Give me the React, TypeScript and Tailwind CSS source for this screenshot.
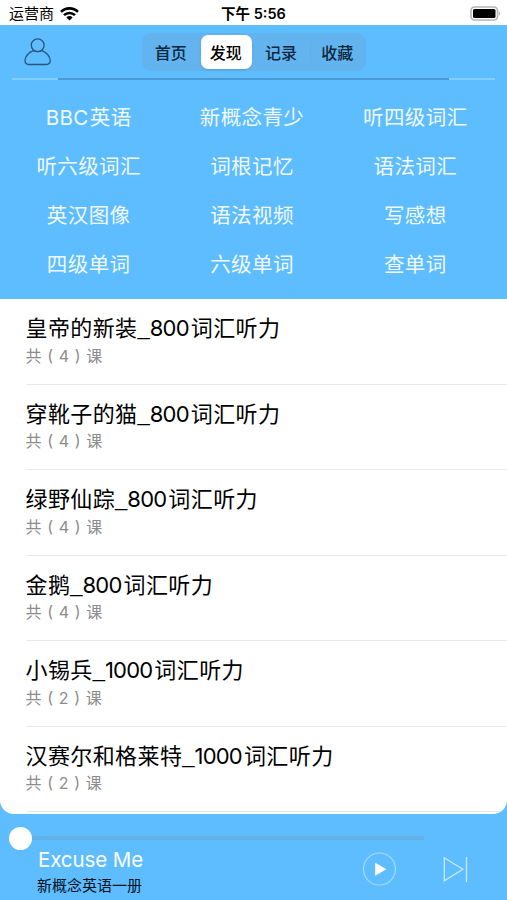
import React, { useState } from 'react';

interface Course {
  id: string;
  name: string;
  words: string;
  suffix: string;
  count: number;
}

const tabs = ['首页', '发现', '记录', '收藏'];

const categories = [
  'BBC 英语', '新概念青少', '听四级词汇',
  '听六级词汇', '词根记忆', '语法词汇',
  '英汉图像', '语法视频', '写感想',
  '四级单词', '六级单词', '查单词'
];

const courses: Course[] = [
  { id: 'emperor', name: '皇帝的新装', words: '800', suffix: '词汇听力', count: 4 },
  { id: 'cat', name: '穿靴子的猫', words: '800', suffix: '词汇听力', count: 4 },
  { id: 'oz', name: '绿野仙踪', words: '800', suffix: '词汇听力', count: 4 },
  { id: 'goose', name: '金鹅', words: '800', suffix: '词汇听力', count: 4 },
  { id: 'soldier', name: '小锡兵', words: '1000', suffix: '词汇听力', count: 2 },
  { id: 'hansel', name: '汉赛尔和格莱特', words: '1000', suffix: '词汇听力', count: 2 }
];

const StatusBar: React.FC = () => (
  <div className="grid h-[25px] shrink-0 grid-cols-3 items-center bg-white pt-[2px] text-black">
    <div className="flex items-center gap-[6px] pl-[9px]">
      <span className="text-[15px] leading-none">运营商</span>
      <svg width="19" height="14" viewBox="0 0 19 14" fill="none" stroke="currentColor" strokeWidth="2.6">
        <path d="M1 4.9a12 12 0 0 1 17 0" />
        <path d="M4 8.2a7.8 7.8 0 0 1 11 0" />
        <path d="M9.5 13.6 6.4 10.4a4.4 4.4 0 0 1 6.2 0z" fill="currentColor" stroke="none" />
      </svg>
    </div>
    <div className="pt-px text-center text-[14.5px] font-semibold leading-none whitespace-nowrap">下午 5:56</div>
    <div className="flex justify-end pr-[6px]">
      <svg width="31" height="15" viewBox="0 0 31 15">
        <rect x="1" y="1" width="26.5" height="13" rx="3.5" fill="#fff" stroke="#b5b5b5" strokeWidth="1.6" />
        <rect x="3" y="3" width="22.5" height="9" rx="1.5" fill="#000" />
        <path d="M28.8 5.2c1.8.8 1.8 3.8 0 4.6z" fill="#b5b5b5" />
      </svg>
    </div>
  </div>
);

const App: React.FC = () => {
  const [activeTab, setActiveTab] = useState('发现');

  return (
    <div className="flex h-[900px] w-[507px] flex-col overflow-hidden bg-[#5ebdff] font-[Inter,'Noto_Sans_CJK_SC',sans-serif]">
      <StatusBar />

      {/* Header */}
      <header className="flex h-[53px] shrink-0 items-center pl-[24px]">
        <button aria-label="profile" className="pt-px text-[#2b567c]">
          <svg width="28" height="28" viewBox="0 0 28 28" fill="none" stroke="currentColor" strokeWidth="1.3">
            <circle cx="13.7" cy="7.2" r="6.4" />
            <path d="M9.2 12.7C4.6 14.5 1 18.5 1 22.4c0 2.9 1.3 4.1 4.6 4.1h16c3.3 0 4.6-1.2 4.6-4.1 0-3.9-3.6-7.9-8.2-9.7" />
            <path d="M9.2 12.7c2.8 1.3 6 1.3 8.8 0" />
          </svg>
        </button>
        <nav className="ml-[90px] flex h-[38px] w-[224px] items-center rounded-[9px] bg-[#63b4ee] p-[2px]">
          {tabs.map((tab) => (
            <button
              key={tab}
              onClick={() => setActiveTab(tab)}
              className={
                tab === activeTab
                  ? 'mx-[2px] h-[34px] w-[51px] shrink-0 rounded-[7px] bg-white pt-[2px] pr-[2px] text-[16px] font-medium leading-none text-black shadow-sm'
                  : 'h-[22px] flex-1 pt-[2px] pr-[2px] text-[16px] font-medium leading-none text-[#0b2740] last:border-l last:border-[#5dafe8] last:pr-0'
              }
            >
              {tab}
            </button>
          ))}
        </nav>
      </header>

      <div className="mx-[12px] flex h-[2px] shrink-0">
        <div className="w-[46px] bg-[#84cdff]" />
        <div className="w-[391px] bg-[#4a9ad5]" />
        <div className="flex-1 bg-[#84cdff]" />
      </div>

      {/* Categories */}
      <section className="grid h-[219px] shrink-0 grid-cols-3 auto-rows-[49px] pt-[14px] pr-[10px] pl-[7px]">
        {categories.map((category) => (
          <button key={category} className="pb-px text-[20.5px] leading-none tracking-[0.4px] text-[#f1f9ff] [word-spacing:-5px]">
            {category}
          </button>
        ))}
      </section>

      {/* Course list */}
      <main className="h-[515px] shrink-0 overflow-hidden rounded-b-[14px] bg-white">
        {courses.map((course) => (
          <div key={course.id} className="ml-[26px] h-[85.5px] border-b border-[#e9e9e9] pt-[15px]">
            <div className="-ml-[0.5px] flex h-[28px] items-center text-[22px] leading-none tracking-[0.4px] text-black">
              <span>{course.name}</span>
              <span className="font-['Liberation_Sans',sans-serif] tracking-normal">_</span>
              <span className="tracking-[-0.8px]">{course.words}</span>
              <span className="ml-[2px]">{course.suffix}</span>
            </div>
            <div className="-ml-[0.5px] flex h-[27px] items-center text-[16px] leading-none text-[#8c8c8c] [word-spacing:1.2px]">
              共 ( {course.count} ) 课
            </div>
          </div>
        ))}
      </main>

      {/* Player */}
      <footer className="flex h-[86px] shrink-0 flex-col">
        <div className="flex h-[24px] shrink-0 items-end pl-[9px]">
          <div className="-mb-[12px] flex h-[24px] items-center">
            <div className="size-[23px] rounded-full bg-white" />
            <div className="h-[4px] w-[392px] bg-[#64b0e8]" />
          </div>
        </div>
        <div className="flex flex-1 items-start pl-[38px]">
          <div className="w-[325px] pt-[9px]">
            <div className="flex h-[26px] items-center text-[20.5px] leading-none tracking-[-0.1px] text-white">Excuse Me</div>
            <div className="-ml-px flex h-[24px] items-center text-[15px] leading-none text-[#04111c]">新概念英语一册</div>
          </div>
          <button aria-label="play" className="mt-[14px]">
            <svg width="34" height="34" viewBox="0 0 34 34">
              <circle cx="16.5" cy="17" r="16" fill="none" stroke="#a5d9ff" strokeWidth="1.2" />
              <path d="M12.2 10.8v13l11.2-6.5z" fill="#fff" />
            </svg>
          </button>
          <button aria-label="next" className="mt-[18px] ml-[45px]">
            <svg width="26" height="27" viewBox="0 0 26 27" fill="none" stroke="#c9e9ff" strokeWidth="1.3">
              <path d="M2.3 1.8v23l18.5-11.5z" />
              <path d="M24.5 1v25" />
            </svg>
          </button>
        </div>
      </footer>
    </div>
  );
};

export default App;
